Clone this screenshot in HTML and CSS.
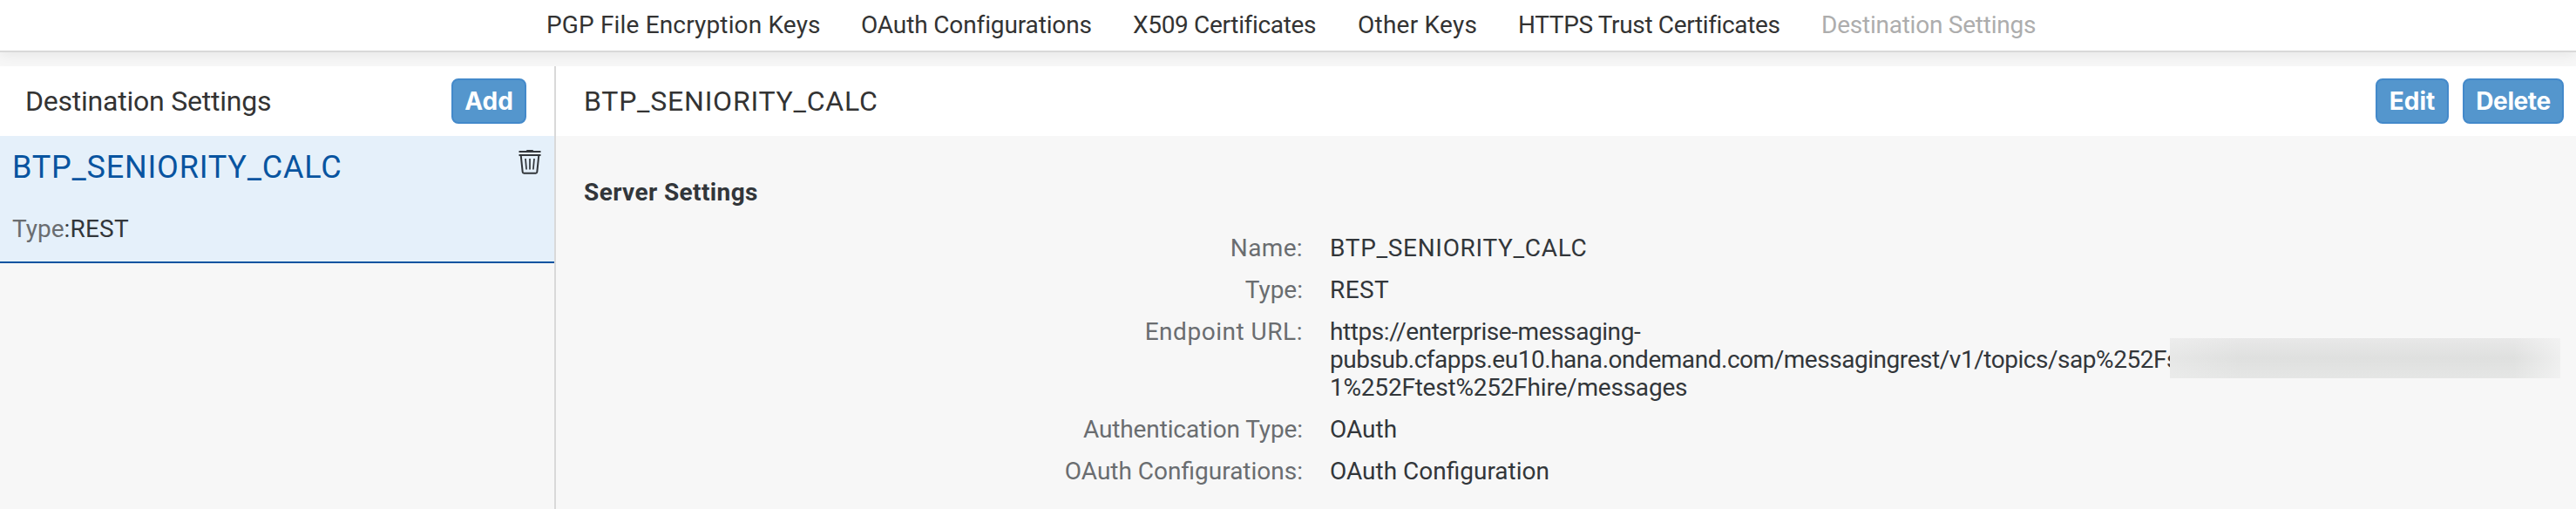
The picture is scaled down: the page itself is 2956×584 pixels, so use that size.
FILE: index.html
```html
<!DOCTYPE html>
<html lang="en">
<head>
<meta charset="utf-8">
<title>Destination Settings</title>
<link rel="stylesheet" href="styles.css">
</head>
<body>
<nav class="tabs">
  <a class="tab tab-pgp">PGP File Encryption Keys</a>
  <a class="tab tab-oauth">OAuth Configurations</a>
  <a class="tab tab-x509">X509 Certificates</a>
  <a class="tab tab-other">Other Keys</a>
  <a class="tab tab-https">HTTPS Trust Certificates</a>
  <a class="tab tab-dest">Destination Settings</a>
</nav>
<main class="split">
  <aside class="master">
    <header class="bar master-bar">
      <h1 class="title title-list">Destination Settings</h1>
      <button class="btn btn-add">Add</button>
    </header>
    <article class="item">
      <div class="item-head">
        <h2 class="item-name">BTP_SENIORITY_CALC</h2>
        <svg class="trash" viewBox="0 0 26 30" fill="none" stroke="#32363a" stroke-width="2">
          <path d="M.5 3h25M.5 7h25" stroke-width="1.8"/>
          <path d="M8.5 3c0-1.6 1-2 2-2h5c1 0 2 .4 2 2z" fill="#32363a" stroke="none"/>
          <path d="M2.700 7l2 19.300q.1 1.500 1.500 1.500h13.600q1.400 0 1.500-1.500L23.300 7"/>
          <path d="M8 11l1.100 12.500M13 11v12.500M18 11l-1.100 12.500" stroke-width="1.700"/>
        </svg>
      </div>
      <p class="item-type"><span class="muted">Type</span>:REST</p>
    </article>
  </aside>
  <section class="detail">
    <header class="bar detail-bar">
      <h1 class="title title-name">BTP_SENIORITY_CALC</h1>
      <div class="actions">
        <button class="btn btn-edit">Edit</button>
        <button class="btn btn-delete">Delete</button>
      </div>
    </header>
    <h3 class="group">Server Settings</h3>
    <dl class="form">
      <dt class="sp-name">Name:</dt><dd class="sp-calc">BTP_SENIORITY_CALC</dd>
      <dt>Type:</dt><dd class="sp-rest">REST</dd>
      <dt class="sp-endpoint">Endpoint URL:</dt>
      <dd class="url"><span class="sp-url1">https://enterprise-messaging-</span><br><span class="sp-url2">pubsub.cfapps.eu10.hana.ondemand.com/messagingrest/v1/topics/sap%252Fs</span><br><span class="sp-url3">1%252Ftest%252Fhire/messages</span><span class="redacted"></span></dd>
      <dt class="sp-auth">Authentication Type:</dt><dd>OAuth</dd>
      <dt>OAuth Configurations:</dt><dd>OAuth Configuration</dd>
    </dl>
  </section>
</main>
</body>
</html>
```
FILE: styles.css
```css
* { box-sizing: border-box; margin: 0; padding: 0; font-weight: 400; }
body {
  height: 584px;
  overflow: hidden;
  display: flex;
  flex-direction: column;
  background: #f7f7f7;
  color: #32363a;
  font: 28px/32px Roboto, Arial, sans-serif;
}
.tabs {
  flex: none;
  height: 60px;
  margin-bottom: 16px;
  padding: 13px 0 0 627px;
  display: grid;
  grid-template-columns: 361px 312px 258px 184px 348px auto;
  background: #fff;
  border-bottom: 2px solid #d9d9d9;
  box-shadow: 0 2px 16px rgba(0, 0, 0, .08);
  color: #333;
}
.tab { white-space: nowrap; }
.tab-pgp { letter-spacing: .157px; }
.tab-oauth { letter-spacing: -.13px; }
.tab-x509 { letter-spacing: -.33px; }
.tab-other { letter-spacing: .24px; }
.tab-https { letter-spacing: -.357px; }
.tab-dest { letter-spacing: -.237px; color: #adadad; }

.split { flex: 1; display: flex; position: relative; }
.master { width: 638px; border-right: 2px solid #d9d9d9; background: #f7f7f7; }
.detail { flex: 1; background: #f7f7f7; }
.bar {
  height: 80px;
  display: flex;
  align-items: center;
  justify-content: space-between;
  background: #fff;
}
.master-bar { padding: 0 32px 0 29px; }
.detail-bar { padding: 0 14px 0 32px; }
.title { font-size: 32px; line-height: 40px; color: #333; padding-bottom: 1px; }
.title-list { letter-spacing: -.226px; }
.title-name { letter-spacing: .77px; }
.actions { display: flex; gap: 16px; }
.btn {
  height: 52px;
  border: 2px solid #4389ca;
  border-radius: 8px;
  background: #5496cd;
  color: #fff;
  font: 700 28px/32px Inter, Arial, sans-serif;
}
.btn-add { width: 86px; }
.btn-edit { width: 84px; }
.btn-delete { width: 116px; letter-spacing: -.4px; }

.item {
  height: 146px;
  padding: 13px 14px 0;
  background: #e5f0fa;
  border-bottom: 2px solid #0854a0;
}
.item-head { display: flex; justify-content: space-between; }
.item-name { font-size: 36px; line-height: 46px; letter-spacing: .8px; color: #0854a0; }
.trash { width: 26px; height: 30px; margin: 2px 1px 0 0; }
.item-type { margin-top: 32px; letter-spacing: .2px; }
.muted { color: #6a6d70; letter-spacing: 0; }

.group { margin: 49px 0 0 32px; font-size: 28px; font-weight: 700; letter-spacing: .386px; }
.form {
  margin-top: 32px;
  display: grid;
  grid-template-columns: 857px auto;
  column-gap: 31px;
  row-gap: 16px;
}
dt { text-align: right; color: #6a6d70; }
.sp-name { letter-spacing: .35px; }
.sp-calc { letter-spacing: .68px; }
.sp-rest { letter-spacing: .4px; }
.sp-endpoint { letter-spacing: .525px; }
.sp-auth { letter-spacing: -.116px; }
.url { position: relative; white-space: nowrap; }
.sp-url1 { letter-spacing: -.425px; }
.sp-url2 { letter-spacing: -.462px; }
.sp-url3 { letter-spacing: -.21px; }
/* Concealed part of the topic path */
.redacted {
  position: absolute;
  left: 964px;
  top: 23px;
  width: 448px;
  height: 46px;
  background:
    linear-gradient(to right, rgba(247, 247, 247, .3), rgba(247, 247, 247, 0) 18%, rgba(247, 247, 247, 0) 88%, rgba(247, 247, 247, .65)),
    linear-gradient(#e8e8e8, #dfe0df 50%, #e5e6e5);
}
```
